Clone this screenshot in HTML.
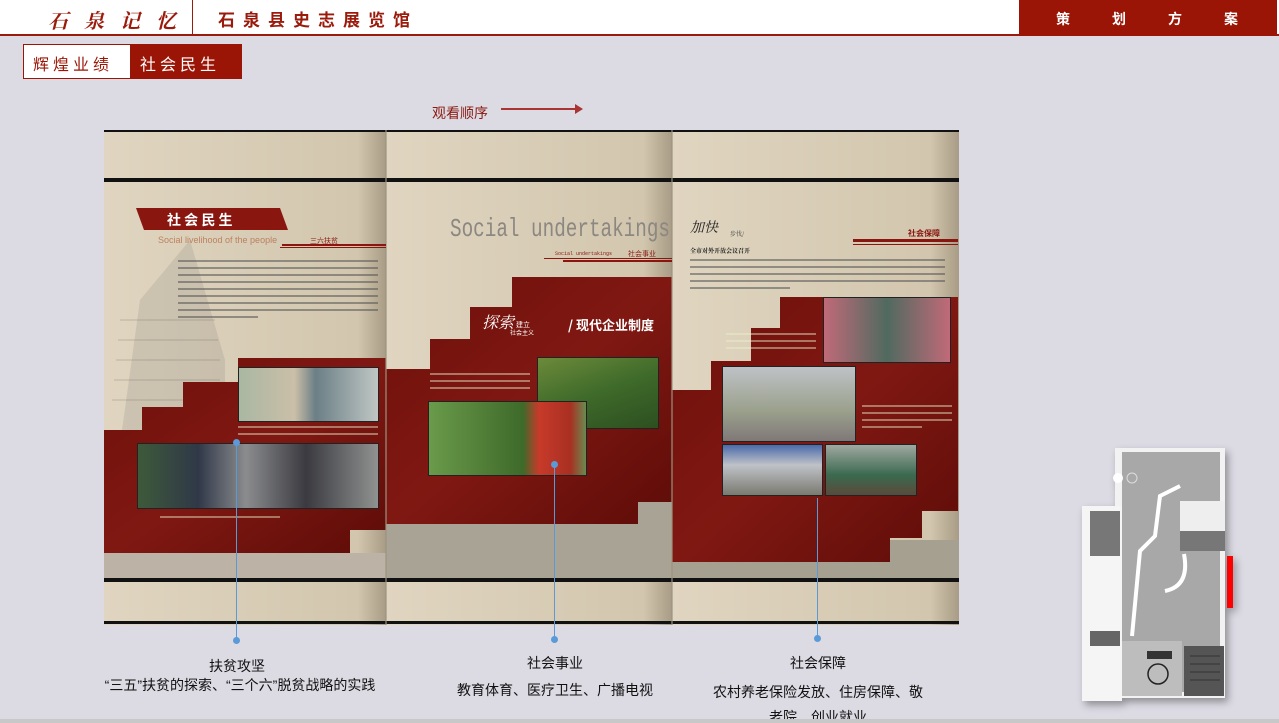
<!DOCTYPE html>
<html><head><meta charset="utf-8"><style>
*{margin:0;padding:0;box-sizing:border-box}
html,body{width:1279px;height:723px;overflow:hidden}
body{background:#dcdae3;font-family:"Liberation Sans","Noto Sans CJK SC",sans-serif;position:relative}
.a{position:absolute}
.hdr{left:0;top:0;width:1279px;height:36px;background:#fff;border-bottom:2px solid #9a1a0c}
.ph{position:absolute;border:1px solid #222}
</style></head><body>
<div class="a hdr"></div>
<div class="a" style="left:48px;top:5px;font-family:'Noto Serif CJK SC',serif;font-size:20px;font-weight:bold;font-style:italic;color:#9a1a0c;letter-spacing:16px">石泉记忆</div>
<div class="a" style="left:192px;top:0;width:1px;height:34px;background:#9a1a0c"></div>
<div class="a" style="left:218px;top:6px;font-size:17px;color:#9a1a0c;letter-spacing:8px;font-weight:bold">石泉县史志展览馆</div>
<div class="a" style="left:1019px;top:0;width:258px;height:36px;background:#9a1505"></div>
<div class="a" style="left:1056px;top:9px;color:#fff;font-size:14px;font-weight:bold">
<span style="position:absolute;left:0">策</span><span style="position:absolute;left:56px">划</span><span style="position:absolute;left:112px">方</span><span style="position:absolute;left:168px">案</span></div>
<div class="a" style="left:23px;top:44px;width:219px;height:35px;border:1px solid #9a1505;background:#fff"></div>
<div class="a" style="left:130px;top:44px;width:112px;height:35px;background:#9a1505"></div>
<div class="a" style="left:33px;top:51px;font-size:16px;color:#9a1505;letter-spacing:4px">辉煌业绩</div>
<div class="a" style="left:140px;top:51px;font-size:16px;color:#fff;letter-spacing:4px">社会民生</div>
<div class="a" style="left:432px;top:103px;font-size:14px;color:#8a1a10">观看顺序</div>
<div class="a" style="left:501px;top:108px;width:76px;height:2px;background:#a33"></div>
<div class="a" style="left:575px;top:104px;width:0;height:0;border-left:8px solid #a33;border-top:5px solid transparent;border-bottom:5px solid transparent"></div>

<svg class="a" style="left:104px;top:130px" width="855" height="495" viewBox="104 130 855 495">
<defs>
<linearGradient id="bg" x1="0" x2="1"><stop offset="0" stop-color="#e0d5c0"/><stop offset=".9" stop-color="#d2c6ae"/><stop offset="1" stop-color="#a99c86"/></linearGradient>
<linearGradient id="rd" x1="0" y1="0" x2="1" y2="1"><stop offset="0" stop-color="#6d0f0a"/><stop offset=".5" stop-color="#801812"/><stop offset="1" stop-color="#5e0c08"/></linearGradient>
</defs>
<rect x="104" y="130" width="282" height="495" fill="url(#bg)"/>
<rect x="386" y="130" width="286" height="495" fill="url(#bg)"/>
<rect x="672" y="130" width="287" height="495" fill="url(#bg)"/>
<g fill="#8f8a82" opacity=".22"><polygon points="104,560 140,300 190,240 225,360 225,560"/></g>
<g stroke="#6a655e" stroke-width="1" opacity=".3">
<line x1="120" y1="320" x2="215" y2="320"/><line x1="118" y1="340" x2="218" y2="340"/><line x1="116" y1="360" x2="220" y2="360"/><line x1="114" y1="380" x2="220" y2="380"/><line x1="112" y1="400" x2="220" y2="400"/>
</g>
<rect x="104" y="553" width="282" height="27" fill="#bcb3a6"/>
<rect x="386" y="502" width="286" height="76" fill="#a9a395"/>
<rect x="672" y="540" width="287" height="38" fill="#a6a090"/>
<polygon fill="url(#rd)" points="238,358 386,358 386,530 350,530 350,553 104,553 104,430 142,430 142,407 183,407 183,382 238,382"/>
<polygon fill="url(#rd)" points="512,277 672,277 672,502 638,502 638,524 386,524 386,369 430,369 430,339 470,339 470,307 512,307"/>
<polygon fill="url(#rd)" points="780,297 958,297 958,511 922,511 922,538 890,538 890,562 672,562 672,390 711,390 711,361 751,361 751,328 780,328"/>
<rect x="104" y="130" width="855" height="2" fill="#111"/>
<rect x="104" y="178" width="855" height="4" fill="#111"/>
<rect x="104" y="578" width="855" height="4" fill="#111"/>
<rect x="104" y="621" width="855" height="3" fill="#111"/>
<rect x="385" y="130" width="2" height="495" fill="#9d927f" opacity=".6"/>
<rect x="671" y="130" width="2" height="495" fill="#9d927f" opacity=".6"/>
<polygon points="136,208 280,208 288,230 144,230" fill="#8a1610"/>
<text x="167" y="225" font-size="14" font-weight="bold" fill="#fff" font-family="Noto Sans CJK SC">社 会 民 生</text>
<text x="158" y="243" font-size="9" fill="#b0603a" opacity=".7" font-family="Liberation Sans">Social livelihood of the people</text>
<text x="310" y="243" font-size="7" fill="#8a1610" font-family="Noto Sans CJK SC">三六扶贫</text>
<rect x="282" y="244" width="104" height="2" fill="#8a1610"/>
<rect x="280" y="247" width="106" height="1" fill="#8a1610"/>
<text x="450" y="236" font-size="26" fill="#8c8780" font-family="Liberation Mono" textLength="220" lengthAdjust="spacingAndGlyphs">Social undertakings</text>
<text x="555" y="255" font-size="5" fill="#8a1610" font-family="Liberation Mono">Social undertakings</text>
<text x="628" y="256" font-size="7" fill="#8a1610" font-family="Noto Sans CJK SC">社会事业</text>
<rect x="544" y="258" width="128" height="1" fill="#8a1610"/><rect x="563" y="260" width="109" height="2" fill="#8a1610"/>
<text x="482" y="328" font-size="16" fill="#fff" font-style="italic" font-family="Noto Serif CJK SC">探索</text>
<text x="516" y="327" font-size="7" fill="#fff" font-family="Noto Sans CJK SC">建立</text>
<text x="510" y="335" font-size="6" fill="#fff" font-family="Noto Sans CJK SC">社会主义</text>
<text x="568" y="330" font-size="13" font-weight="bold" fill="#fff" font-family="Noto Sans CJK SC">/ 现代企业制度</text>
<text x="690" y="232" font-size="14" fill="#222" font-style="italic" font-family="Noto Serif CJK SC">加快</text>
<text x="730" y="236" font-size="6" fill="#333" font-family="Noto Serif CJK SC">步伐/</text>
<text x="690" y="253" font-size="6" fill="#222" font-weight="bold" font-family="Noto Serif CJK SC">全市对外开放会议召开</text>
<text x="908" y="236" font-size="8" fill="#8a1610" font-weight="bold" font-family="Noto Sans CJK SC">社会保障</text>
<rect x="853" y="239" width="105" height="3" fill="#8a1610"/><rect x="853" y="244" width="105" height="1" fill="#8a1610"/>
<g fill="#555" opacity=".55">
<rect x="178" y="260" width="200" height="2"/><rect x="178" y="267" width="200" height="2"/><rect x="178" y="274" width="200" height="2"/><rect x="178" y="281" width="200" height="2"/><rect x="178" y="288" width="200" height="2"/><rect x="178" y="295" width="200" height="2"/><rect x="178" y="302" width="200" height="2"/><rect x="178" y="309" width="200" height="2"/><rect x="178" y="316" width="80" height="2"/>
<rect x="690" y="259" width="255" height="2"/><rect x="690" y="266" width="255" height="2"/><rect x="690" y="273" width="255" height="2"/><rect x="690" y="280" width="255" height="2"/><rect x="690" y="287" width="100" height="2"/>
</g>
<g fill="#eec" opacity=".45">
<rect x="430" y="373" width="100" height="2"/><rect x="430" y="380" width="100" height="2"/><rect x="430" y="387" width="100" height="2"/>
<rect x="726" y="333" width="90" height="2"/><rect x="726" y="340" width="90" height="2"/><rect x="726" y="347" width="90" height="2"/>
<rect x="862" y="405" width="90" height="2"/><rect x="862" y="412" width="90" height="2"/><rect x="862" y="419" width="90" height="2"/><rect x="862" y="426" width="60" height="2"/>
<rect x="238" y="426" width="140" height="2"/><rect x="238" y="433" width="140" height="2"/>
<rect x="160" y="516" width="120" height="2"/>
</g>
</svg>
<div class="ph" style="left:238px;top:367px;width:141px;height:55px;background:linear-gradient(90deg,#a9b7a2,#cbbfa8 40%,#6b7f86 55%,#bfc7c4)"></div>
<div class="ph" style="left:137px;top:443px;width:242px;height:66px;background:linear-gradient(90deg,#3d5a3a,#303848 25%,#8b8c8e 45%,#3a3a40 70%,#8f9290)"></div>
<div class="ph" style="left:537px;top:357px;width:122px;height:72px;background:linear-gradient(160deg,#6c8a3a,#3e6a2a 50%,#2d4f20)"></div>
<div class="ph" style="left:428px;top:401px;width:159px;height:75px;background:linear-gradient(90deg,#6a9a4a,#3e6a2a 60%,#c83a2a 70%,#a83022 90%,#6a8a50)"></div>
<div class="ph" style="left:823px;top:297px;width:128px;height:66px;background:linear-gradient(90deg,#c06a78,#506a60 50%,#c06a78)"></div>
<div class="ph" style="left:722px;top:366px;width:134px;height:76px;background:linear-gradient(180deg,#bfc2c6,#9aa08c 60%,#807878)"></div>
<div class="ph" style="left:722px;top:444px;width:101px;height:52px;background:linear-gradient(180deg,#4a6aaa,#bfc2c8 40%,#7a7a70)"></div>
<div class="ph" style="left:825px;top:444px;width:92px;height:52px;background:linear-gradient(180deg,#a0a8a0,#3a6a50 60%,#5a4a3a)"></div>
<div class="a" style="left:236px;top:443px;width:1px;height:197px;background:#5a9ad8"></div>
<div class="a" style="left:233px;top:439px;width:7px;height:7px;border-radius:50%;background:#5a9ad8"></div>
<div class="a" style="left:233px;top:637px;width:7px;height:7px;border-radius:50%;background:#5a9ad8"></div>
<div class="a" style="left:554px;top:465px;width:1px;height:175px;background:#5a9ad8"></div>
<div class="a" style="left:551px;top:461px;width:7px;height:7px;border-radius:50%;background:#5a9ad8"></div>
<div class="a" style="left:551px;top:636px;width:7px;height:7px;border-radius:50%;background:#5a9ad8"></div>
<div class="a" style="left:817px;top:498px;width:1px;height:140px;background:#5a9ad8"></div>
<div class="a" style="left:814px;top:635px;width:7px;height:7px;border-radius:50%;background:#5a9ad8"></div>
<div class="a" style="left:137px;top:656px;width:200px;text-align:center;font-size:14px;color:#111">扶贫攻坚</div>
<div class="a" style="left:60px;top:675px;width:360px;text-align:center;font-size:14px;color:#111">“三五”扶贫的探索、“三个六”脱贫战略的实践</div>
<div class="a" style="left:455px;top:653px;width:200px;text-align:center;font-size:14px;color:#111">社会事业</div>
<div class="a" style="left:405px;top:680px;width:300px;text-align:center;font-size:14px;color:#111">教育体育、医疗卫生、广播电视</div>
<div class="a" style="left:718px;top:653px;width:200px;text-align:center;font-size:14px;color:#111">社会保障</div>
<div class="a" style="left:700px;top:680px;width:236px;text-align:center;font-size:14px;line-height:25px;color:#111">农村养老保险发放、住房保障、敬<br>老院、创业就业</div>
<svg class="a" style="left:1080px;top:446px;filter:drop-shadow(3px 4px 4px rgba(0,0,0,.35))" width="155" height="255" viewBox="0 0 155 255">
<rect x="35" y="2" width="110" height="250" fill="#f2f2f2"/>
<rect x="2" y="60" width="40" height="195" fill="#f5f5f5"/>
<rect x="42" y="6" width="98" height="240" fill="#a8a8a8"/>
<rect x="42" y="195" width="60" height="55" fill="#bdbdbd"/>
<rect x="104" y="200" width="40" height="50" fill="#555"/>
<rect x="10" y="65" width="30" height="45" fill="#777"/>
<rect x="10" y="185" width="30" height="15" fill="#666"/>
<rect x="100" y="55" width="45" height="30" fill="#eee"/>
<rect x="100" y="85" width="45" height="20" fill="#777"/>
<polyline points="100,40 80,50 75,90 60,105 52,190" stroke="#fff" stroke-width="4" fill="none"/>
<path d="M104,108 Q110,140 85,145" stroke="#fff" stroke-width="4" fill="none"/>
<rect x="147" y="110" width="6" height="52" fill="#f00"/>
<circle cx="78" cy="228" r="10" fill="none" stroke="#222" stroke-width="1.5"/>
<rect x="67" y="205" width="25" height="8" fill="#333"/>
<circle cx="38" cy="32" r="5" fill="#fff"/><circle cx="52" cy="32" r="5" fill="none" stroke="#ddd"/>
<g stroke="#333" stroke-width="1"><line x1="110" y1="210" x2="140" y2="210"/><line x1="110" y1="218" x2="140" y2="218"/><line x1="110" y1="226" x2="140" y2="226"/><line x1="110" y1="234" x2="140" y2="234"/></g>
</svg>
<div class="a" style="left:0;top:719px;width:1279px;height:4px;background:#c8c8c8"></div>
</body></html>
